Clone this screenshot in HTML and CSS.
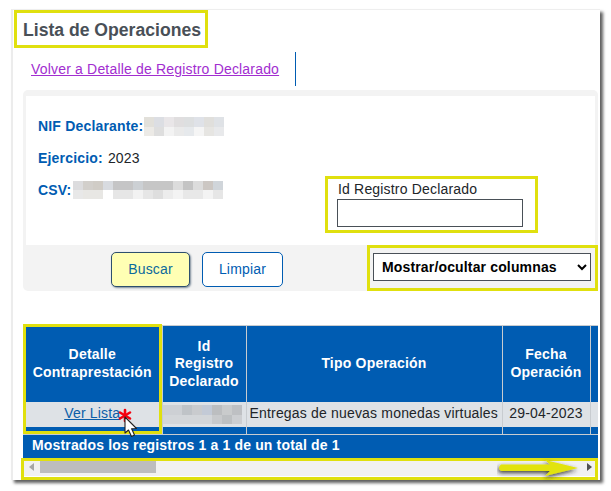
FILE: index.html
```html
<!DOCTYPE html>
<html lang="es">
<head>
<meta charset="utf-8">
<title>Lista de Operaciones</title>
<link rel="stylesheet" href="styles.css">
</head>
<body>
<div class="window">
  <h1 class="title">Lista de Operaciones</h1>
  <nav class="nav"><a class="back" href="#">Volver a Detalle de Registro Declarado</a></nav>
  <section class="card">
    <div class="card-top">
      <div class="facts">
        <div class="fact"><b>NIF Declarante:</b>
          <svg class="blur" width="80" height="19" shape-rendering="crispEdges"><rect width="10" height="10" fill="#e2e0da"/><rect x="10" width="10" height="10" fill="#dcdee3"/><rect x="20" width="10" height="10" fill="#e9e6e8"/><rect x="30" width="10" height="10" fill="#e0dedf"/><rect x="40" width="10" height="10" fill="#dddfe0"/><rect x="50" width="10" height="10" fill="#dfe2e8"/><rect x="60" width="10" height="10" fill="#e0dfdc"/><rect x="70" width="10" height="10" fill="#dfe2e6"/><rect y="10" width="10" height="9" fill="#eceae6"/><rect x="10" y="10" width="10" height="9" fill="#dedede"/><rect x="20" y="10" width="10" height="9" fill="#f3f3f3"/><rect x="30" y="10" width="10" height="9" fill="#eaeaea"/><rect x="40" y="10" width="10" height="9" fill="#e6e9ec"/><rect x="50" y="10" width="10" height="9" fill="#f5f5f5"/><rect x="60" y="10" width="10" height="9" fill="#e6e5e2"/><rect x="70" y="10" width="10" height="9" fill="#e8e9eb"/></svg>
        </div>
        <div class="fact"><b>Ejercicio:</b> 2023</div>
        <div class="fact fact-csv"><b>CSV:</b>
          <svg class="blur" width="150" height="18" shape-rendering="crispEdges"><rect width="10" height="9" fill="#dcdcde"/><rect x="10" width="10" height="9" fill="#d2cfcb"/><rect x="20" width="10" height="9" fill="#d0ccc6"/><rect x="30" width="10" height="9" fill="#d8dbe0"/><rect x="40" width="20" height="9" fill="#c5c5c6"/><rect x="60" width="10" height="9" fill="#ccd0d4"/><rect x="70" width="30" height="9" fill="#c6c6c6"/><rect x="100" width="10" height="9" fill="#dcdcdc"/><rect x="110" width="10" height="9" fill="#c4c4c4"/><rect x="120" width="10" height="9" fill="#dcdcdc"/><rect x="130" width="10" height="9" fill="#ccc7c3"/><rect x="140" width="10" height="9" fill="#d0d5da"/><rect y="9" width="10" height="9" fill="#e8e8e8"/><rect x="10" y="9" width="20" height="9" fill="#e8e7e4"/><rect x="30" y="9" width="10" height="9" fill="#ffffff"/><rect x="40" y="9" width="20" height="9" fill="#e6e6e6"/><rect x="60" y="9" width="10" height="9" fill="#f2f2f2"/><rect x="70" y="9" width="10" height="9" fill="#e6e6e6"/><rect x="80" y="9" width="10" height="9" fill="#dedede"/><rect x="90" y="9" width="10" height="9" fill="#ececec"/><rect x="100" y="9" width="10" height="9" fill="#f3f3f3"/><rect x="110" y="9" width="20" height="9" fill="#e8e8e8"/><rect x="130" y="9" width="10" height="9" fill="#f3f3f3"/><rect x="140" y="9" width="10" height="9" fill="#e6e6e6"/></svg>
        </div>
      </div>
      <label class="idfield">
        <span class="idlabel">Id Registro Declarado</span>
        <input class="idinput" type="text">
      </label>
    </div>
    <div class="card-bar">
      <button class="btn btn-primary" type="button">Buscar</button>
      <button class="btn" type="button">Limpiar</button>
      <div class="selectbox">
        <select class="columns"><option>Mostrar/ocultar columnas</option></select>
      </div>
    </div>
  </section>
  <section class="results">
    <table class="grid">
      <colgroup><col class="c1"><col class="c2"><col class="c3"><col class="c4"><col class="c5"></colgroup>
      <thead>
        <tr><th>Detalle<br>Contraprestación</th><th>Id<br>Registro<br>Declarado</th><th>Tipo Operación</th><th>Fecha<br>Operación</th><th></th></tr>
      </thead>
      <tbody>
        <tr class="row">
          <td class="center"><a class="list" href="#">Ver Lista</a></td>
          <td class="blurcell"><svg class="blurtable" width="80" height="19" shape-rendering="crispEdges"><rect width="80" height="19" fill="#cdd0d4"/><rect x="20" width="10" height="10" fill="#bfc3c7"/><rect x="30" width="10" height="10" fill="#c9cbce"/><rect x="40" width="10" height="10" fill="#c3cad6"/><rect x="50" width="10" height="10" fill="#bcbec0"/><rect x="60" width="10" height="10" fill="#c9cbcc"/><rect x="70" width="10" height="10" fill="#bec0c3"/><rect y="10" width="50" height="9" fill="#d3d6d9"/><rect x="50" y="10" width="10" height="9" fill="#c8cacc"/><rect x="60" y="10" width="10" height="9" fill="#bdc0c2"/><rect x="70" y="10" width="10" height="9" fill="#ccced1"/></svg></td>
          <td class="kind">Entregas de nuevas monedas virtuales</td>
          <td class="center">29-04-2023</td>
          <td></td>
        </tr>
        <tr class="spacer"><td></td><td></td><td></td><td></td><td></td></tr>
      </tbody>
    </table>
    <div class="summary">Mostrados los registros 1 a 1 de un total de 1</div>
    <div class="scrollbar">
      <svg class="scroll-arrow" width="5" height="8"><path d="M5 0V8L0 4Z" fill="#a6a6a6"/></svg>
      <div class="thumb"></div>
      <svg class="scroll-arrow" width="5" height="8"><path d="M0 0V8L5 4Z" fill="#505050"/></svg>
    </div>
  </section>
  <div class="mark mark-column"></div>
  <div class="mark mark-scroll"></div>
  <svg class="pointer" width="36" height="40" viewBox="0 0 36 40">
    <g stroke="#f5000f" stroke-width="2.6" stroke-linecap="round"><path d="M9 2V13"/><path d="M4 4.500L14 10.500"/><path d="M14 4.500L4 10.500"/></g>
    <path d="M9 9V25L12.500 22L15.500 28.500L18.500 27L15.600 20.800L20.500 20.500Z" fill="#fff" stroke="#222" stroke-width="1.1" stroke-linejoin="round"/>
  </svg>
  <svg class="arrow" width="96" height="34" viewBox="0 0 96 34">
    <defs><filter id="sh" x="-10%" y="-30%" width="125%" height="170%"><feDropShadow dx="-1" dy="2" stdDeviation="2" flood-color="#222" flood-opacity=".85"/></filter></defs>
    <path d="M4 12.500H53L48 8L81 16L48 24L53 19H4Q0 16 4 12.500Z" fill="#e2e310" filter="url(#sh)"/>
  </svg>
</div>
</body>
</html>
```
FILE: styles.css
```css
* { box-sizing: border-box; }
html, body { margin: 0; padding: 0; background: #fff; }
body {
  width: 611px; height: 491px; overflow: hidden;
  font-family: "Liberation Sans", Arial, sans-serif;
  font-size: 14px;
  letter-spacing: .18px;
  color: #212529;
}
.window {
  position: relative;
  margin: 9px 0 0 11px;
  width: 589px; height: 471px;
  background: #fff;
  border-top: 1px solid #eee;
  border-left: 2px solid #ececec;
  box-shadow: 3px 3px 3px #5f5f5f;
}
.title {
  margin: 0 0 0 1px;
  width: 194px; height: 38px;
  border: 3px solid #e0e00e;
  padding-left: 6px;
  font-size: 17.600px; line-height: 34px; font-weight: 700;
  letter-spacing: 0;
  color: #495057;
  white-space: nowrap;
}
.nav {
  margin: 4px 0 0 18px;
  width: 265px; height: 34px;
  border-right: 1px solid #005cb2;
  display: flex; align-items: center;
}
.back { color: #a22ed0; font-size: 14px; }
.card { margin: 4px 0 0 10px; width: 575px; }
.card-top {
  height: 155px;
  border: 3px solid #f3f3f3;
  border-top-width: 6px;
  border-bottom: 0;
  border-radius: 5px 5px 0 0;
  display: grid;
  grid-template-columns: 299px 213px;
}
.facts { padding: 14px 0 0 12px; }
.fact { height: 32px; display: flex; align-items: center; gap: 1px; white-space: pre; }
.fact-csv { gap: 2px; }
.fact b { color: #005cb2; letter-spacing: .18px; }
.blur { display: block; }
.idfield {
  margin-top: 80px;
  height: 57px;
  border: 3px solid #e0e00e;
  padding: 1px 0 0 10px;
  display: flex; flex-direction: column;
}
.idlabel { font-size: 14px; line-height: 18px; color: #212529; margin-bottom: 1px; }
.idinput {
  width: 186px; height: 28px; margin: 0 0 0 -1px;
  border: 1px solid #495057; background: #fff; border-radius: 0; padding: 0;
}
.card-bar {
  height: 46px;
  background: #f3f3f3;
  border-radius: 0 0 5px 5px;
  display: flex; align-items: flex-start;
  padding: 7px 0 0 88px;
}
.btn {
  width: 81px; height: 35px;
  margin-right: 12px;
  border: 1px solid #005cb2;
  border-radius: 5px;
  background: #fff;
  color: #005cb2;
  font: 14px "Liberation Sans", Arial, sans-serif;
  letter-spacing: .18px;
  padding: 0 0 2px;
}
.btn-primary {
  width: 79px;
  background: #ffffb4;
  border-color: #2d4f6e;
  box-shadow: 1px 1px 2px #7a8a99;
  color: #0b6a9c;
}
.selectbox {
  margin: -7px 0 0 auto;
  width: 231px; height: 46px;
  border: 3px solid #e0e00e;
  padding: 5px 0 0 3px;
}
.columns {
  display: block;
  width: 218px; height: 28px;
  background: #fff;
  border: 1px solid #495057;
  border-radius: 0;
  font: 700 14px "Liberation Sans", Arial, sans-serif;
  letter-spacing: .15px;
  color: #000;
  padding-left: 4px;
}
.results { margin: 34px 0 0 10px; width: 575px; }
.grid {
  width: 575px;
  table-layout: fixed;
  border-collapse: collapse;
  background: #005cb2;
}
.c1 { width: 139px; } .c2 { width: 84px; } .c3 { width: 256px; } .c4 { width: 88px; } .c5 { width: 8px; }
.grid th, .grid td {
  padding: 0;
  border-left: 1px solid #c8ccd0;
  border-right: 1px solid #c8ccd0;
}
.grid th:first-child, .grid td:first-child { border-left: 0; }
.grid th:last-child, .grid td:last-child { border-right: 0; }
.grid thead tr { border-top: 1px solid #c8ccd0; height: 76px; }
.grid th {
  color: #fff; font-size: 14px; font-weight: 700; line-height: 17.500px;
  letter-spacing: .2px; text-align: center;
}
.row { height: 25px; }
.grid .row td {
  background: #dee2e6;
  font-size: 14px; white-space: nowrap; overflow: hidden;
  color: #212529;
  padding-bottom: 2px;
}
.grid .row .kind { padding-left: 3px; }
.grid .row .center { text-align: center; }
.grid .row .blurcell { vertical-align: middle; padding-bottom: 0; }
.blurtable { display: block; margin-left: -1px; }
.grid .row .list { color: #0b5ea8; font-size: 14px; }
.spacer { height: 8px; border-bottom: 1px solid #c8ccd0; }
.summary {
  height: 23px;
  background: #005cb2;
  color: #fff;
  font-size: 14px; font-weight: 700; line-height: 21px;
  letter-spacing: .16px;
  padding-left: 9px;
  white-space: nowrap;
}
.scrollbar {
  height: 17px;
  margin-top: 1px;
  background: #f1f1f1;
  display: flex; align-items: center;
  padding: 0 6px 2px 6px;
  position: relative;
}
.thumb { margin-left: 6px; margin-right: auto; width: 116px; height: 12px; background: #bdbdbd; }
.scroll-arrow { display: block; }
.mark { position: absolute; border: 3px solid #e0e00e; }
.mark-column { left: 10px; top: 314px; width: 139px; height: 110px; }
.mark-scroll { left: 8px; top: 448px; width: 577px; height: 22px; }
.pointer { position: absolute; left: 103px; top: 398px; }
.arrow { position: absolute; left: 484px; top: 442px; }
```
